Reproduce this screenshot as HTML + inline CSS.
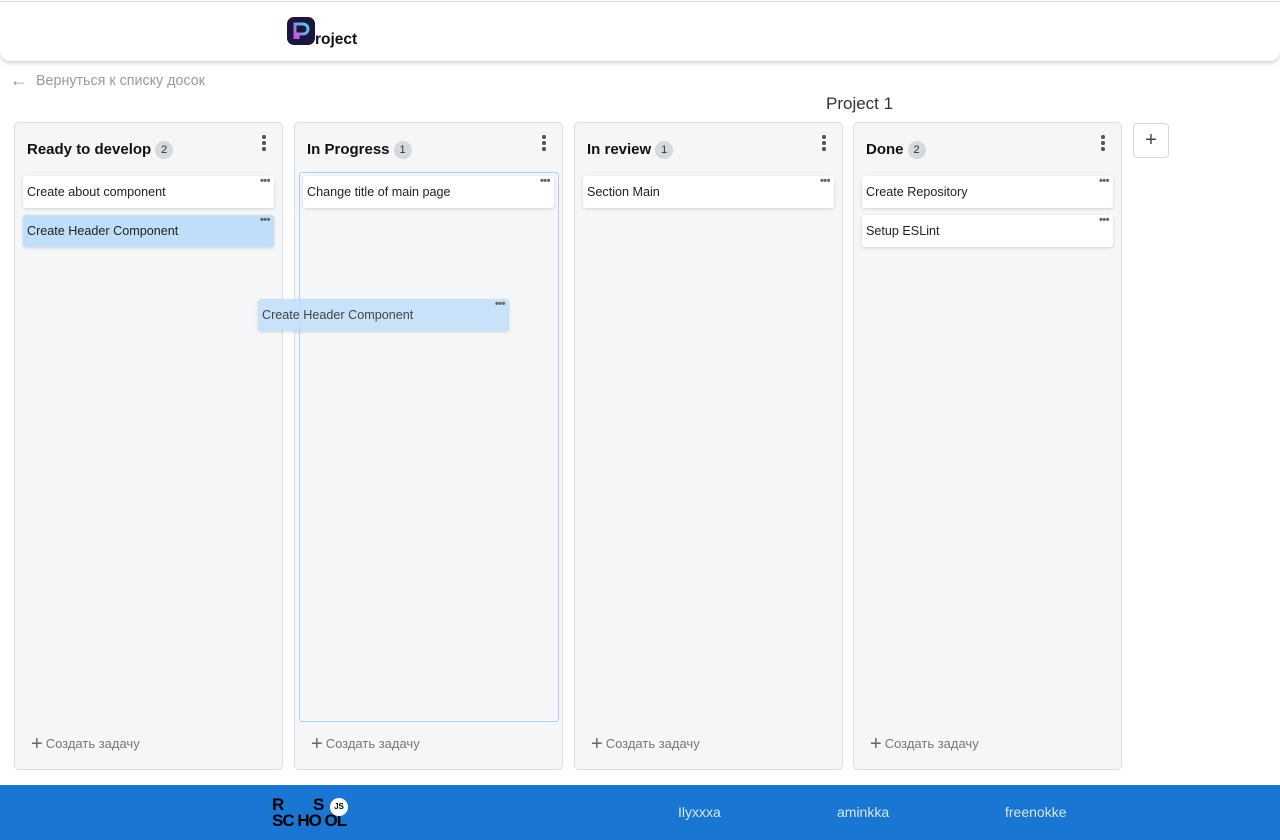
<!DOCTYPE html>
<html><head><meta charset="utf-8"><style>
*{box-sizing:border-box;margin:0;padding:0}
body{width:1280px;height:840px;background:#fff;font-family:"Liberation Sans",Arial,sans-serif;position:relative;overflow:hidden}
.hdr{position:absolute;left:0;top:1px;width:1280px;height:60px;background:#fff;border-top:1px solid #ddd;border-radius:0 0 10px 10px;box-shadow:0 2px 4px rgba(0,0,0,.18)}
.logo{position:absolute;left:287px;top:17px;width:28px;height:28px}
.logotxt{position:absolute;left:315px;top:31px;font-weight:bold;font-size:15.5px;color:#111}
.back{position:absolute;left:10px;top:70px;font-size:14.3px;color:#9a9a9a}
.back b{font-weight:normal;font-size:18px;vertical-align:-1px;margin-right:8px}
.title{position:absolute;left:826px;top:94px;font-size:17px;color:#333}
.col{position:absolute;top:122px;width:269px;height:648px;background:#f5f6f8;border:1px solid #dcdee2;border-radius:5px}
.col h3{position:absolute;left:12px;top:18px;font-size:15px;font-weight:bold;color:#111}
.badge{display:inline-block;width:18px;height:18px;border-radius:9px;background:#d5d8dc;font-size:11px;font-weight:normal;text-align:center;line-height:18px;color:#333;margin-left:4px;vertical-align:1px}
.vdots{position:absolute;right:16px;top:12px;width:4px}
.vdots i{display:block;width:3.5px;height:3.5px;border-radius:50%;background:#555;margin-bottom:2.5px}
.card{position:absolute;left:8px;width:251px;height:32px;background:#fff;border-radius:3px;box-shadow:0 1px 3px rgba(0,0,0,.15);font-size:12.6px;color:#222;padding:9px 4px}
.card.b{background:#bfdef9}
.hd{position:absolute;right:4px;top:-1px;font-size:11px;color:#666;letter-spacing:-0.5px;font-weight:bold}
.add{position:absolute;left:16px;top:610px;font-size:13px;color:#777}
.add b{font-size:20px;font-weight:normal;color:#666;vertical-align:-2px;margin-right:3px}
.foot{position:absolute;left:0;top:785px;width:1280px;height:55px;background:#1976d2}
.foot span{position:absolute;top:19px;font-size:14px;color:#d6e6f7}
</style></head><body>
<div class="hdr"></div>
<svg class="logo" viewBox="0 0 28 28"><rect x="0" y="0" width="28" height="28" rx="7" fill="#1b1540"/><path d="M8 22V7h8a5 5 0 0 1 0 10h-5v5" fill="none" stroke="url(#g)" stroke-width="3"/><defs><linearGradient id="g" x1="0" y1="1" x2="1" y2="0"><stop offset="0" stop-color="#d24be0"/><stop offset="1" stop-color="#3fd8e8"/></linearGradient></defs></svg>
<div class="logotxt">roject</div>
<div class="back"><b>&#8592;</b>Вернуться к списку досок</div>
<div class="title">Project 1</div>

<div class="col" style="left:14px"><h3>Ready to develop<span class="badge">2</span></h3><div class="vdots"><i></i><i></i><i></i></div>
<div class="card" style="top:53px">Create about component<span class="hd">•••</span></div>
<div class="card b" style="top:92px">Create Header Component<span class="hd">•••</span></div>
<div class="add"><b>+</b>Создать задачу</div></div>

<div class="col" style="left:294px"><h3>In Progress<span class="badge">1</span></h3><div class="vdots"><i></i><i></i><i></i></div>
<div style="position:absolute;left:4px;top:49px;width:260px;height:550px;border:1.5px solid #a9d2f5;border-radius:3px"></div>
<div class="card" style="top:53px">Change title of main page<span class="hd">•••</span></div>
<div class="add"><b>+</b>Создать задачу</div></div>

<div class="col" style="left:574px"><h3>In review<span class="badge">1</span></h3><div class="vdots"><i></i><i></i><i></i></div>
<div class="card" style="top:53px">Section Main<span class="hd">•••</span></div>
<div class="add"><b>+</b>Создать задачу</div></div>

<div class="col" style="left:853px"><h3>Done<span class="badge">2</span></h3><div class="vdots"><i></i><i></i><i></i></div>
<div class="card" style="top:53px">Create Repository<span class="hd">•••</span></div>
<div class="card" style="top:92px">Setup ESLint<span class="hd">•••</span></div>
<div class="add"><b>+</b>Создать задачу</div></div>

<div class="card" style="left:258px;top:299px;width:251px;height:32px;background:rgba(190,222,249,.85);color:#444">Create Header Component<span class="hd">•••</span></div>

<div style="position:absolute;left:1133px;top:123px;width:36px;height:35px;border:1px solid #d6d8dc;border-radius:4px;text-align:center;font-size:20px;line-height:32px;color:#444">+</div>

<div class="foot">
<div style="position:absolute;left:272px;top:12px;font-weight:bold;font-size:17px;line-height:16px;color:#000;letter-spacing:-1px">R&nbsp;&nbsp;&nbsp;&nbsp;&nbsp;&nbsp;&nbsp;&nbsp;S<br>SC HO OL</div>
<div style="position:absolute;left:330px;top:13px;width:18px;height:18px;border-radius:50%;background:#fff;font-size:8px;font-weight:bold;text-align:center;line-height:18px">JS</div>
<span style="left:678px">Ilyxxxa</span><span style="left:837px">aminkka</span><span style="left:1005px">freenokke</span>
</div>
</body></html>
